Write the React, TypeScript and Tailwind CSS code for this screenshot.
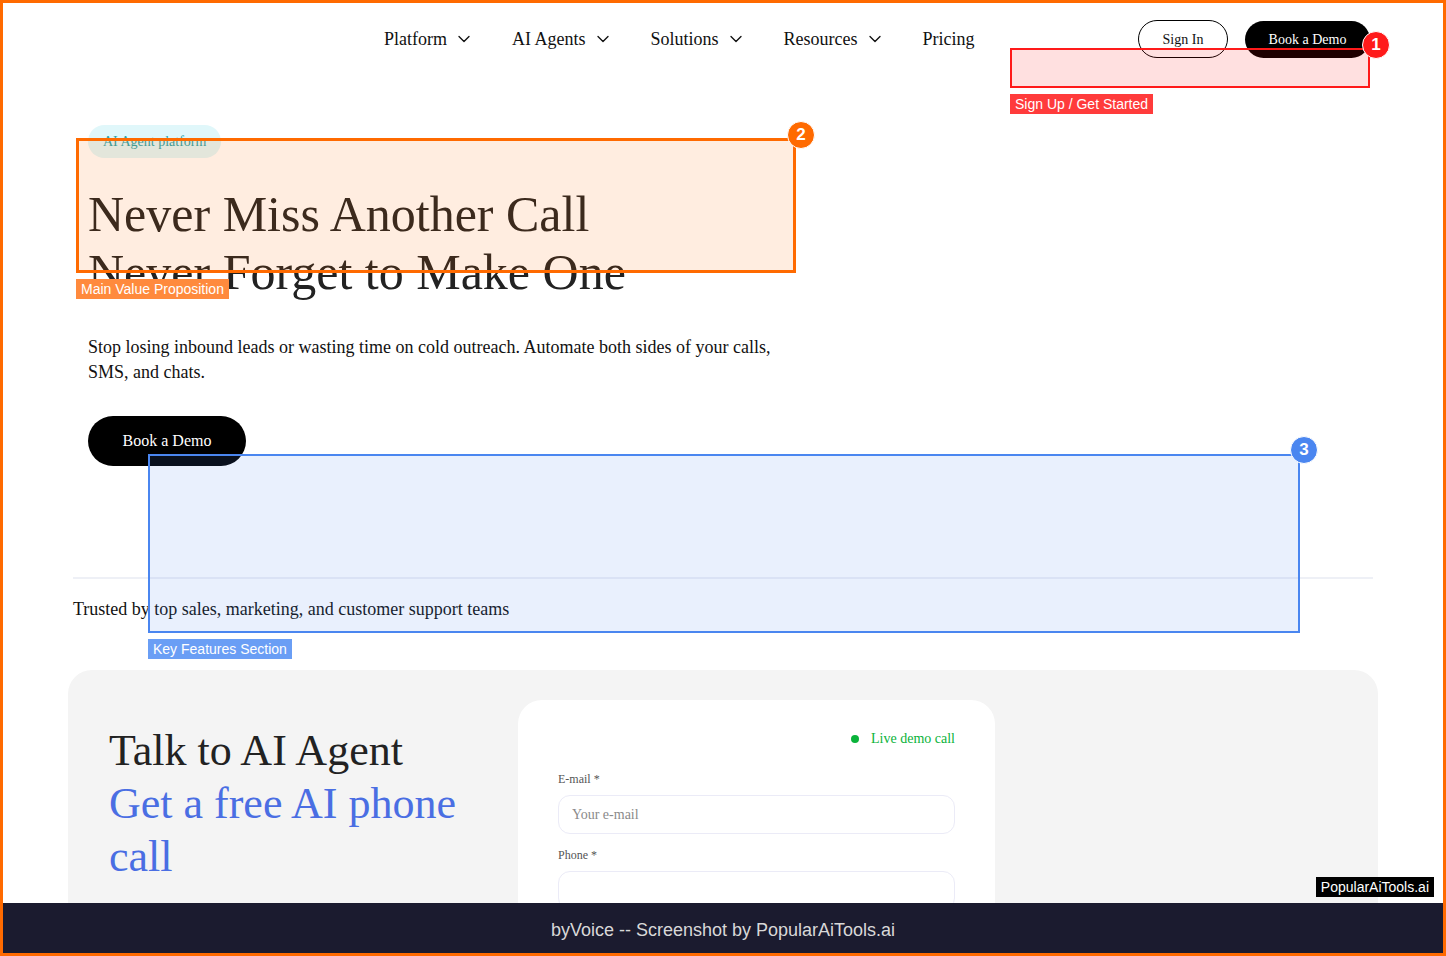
import { ChevronDown } from 'lucide-react';

const navItems = [
  { label: 'Platform', menu: true },
  { label: 'AI Agents', menu: true },
  { label: 'Solutions', menu: true },
  { label: 'Resources', menu: true },
  { label: 'Pricing', menu: false },
];

function Header() {
  return (
    <header className="flex h-[72px] items-center pl-[381px] pr-[73px]">
      <nav className="flex items-center gap-[38px]">
        {navItems.map((item) => (
          <a key={item.label} href="#" className="flex items-center gap-[7px] text-[18px] text-[#111]">
            {item.label}
            {item.menu && <ChevronDown size={20} strokeWidth={1.6} className="text-[#111]" />}
          </a>
        ))}
      </nav>
      <div className="ml-auto flex items-center gap-[17px]">
        <button className="h-[38px] w-[90px] rounded-full border border-black text-[14px] text-[#111]">
          Sign In
        </button>
        <button className="h-[37px] w-[125px] rounded-full bg-black text-[14px] text-white">Book a Demo</button>
      </div>
    </header>
  );
}

function Hero() {
  return (
    <section className="px-[85px] pt-[50px]">
      <span className="inline-flex h-[33px] items-center rounded-full bg-[#e0f7fa] px-[15px] text-[14px] text-[#2aa3a8]">
        AI Agent platform
      </span>
      <h1 className="mt-[27px] text-[50px] leading-[58px] text-[#222]">
        Never Miss Another Call
        <br />
        Never Forget to Make One
      </h1>
      <p className="mt-[34px] w-[700px] text-[18px] leading-[25px] text-[#111]">
        Stop losing inbound leads or wasting time on cold outreach. Automate both sides of your calls, SMS, and chats.
      </p>
      <button className="mt-[31px] h-[50px] w-[158px] rounded-full bg-black text-[16px] text-white">Book a Demo</button>
    </section>
  );
}

function Trusted() {
  return (
    <section className="px-[70px] pt-[111px]">
      <div className="h-[2px] bg-[#eef0f6]" />
      <p className="mt-[18px] text-[18px] leading-[25px] text-[#111]">
        Trusted by top sales, marketing, and customer support teams
      </p>
    </section>
  );
}

function DemoSection() {
  return (
    <section className="px-[65px] pt-[48px]">
      <div className="flex rounded-[24px] bg-[#f4f4f4] pl-[41px] pt-[30px]">
        <div className="w-[409px] pt-[24px]">
          <h2 className="w-[380px] text-[44px] leading-[53px] text-[#222]">
            Talk to AI Agent
            <br />
            <span className="text-[#4a6ee3]">Get a free AI phone call</span>
          </h2>
        </div>
        <div className="h-[260px] w-[477px] rounded-[24px] bg-white px-[40px] pt-[29px]">
          <div className="flex items-center justify-end gap-[12px] text-[14px] leading-[20px] text-[#0ab33a]">
            <span className="h-[8px] w-[8px] rounded-full bg-[#0ab33a]" />
            Live demo call
          </div>
          <label className="mt-[22px] block text-[12px] leading-[16px] text-[#555]">E-mail *</label>
          <input
            type="text"
            placeholder="Your e-mail"
            className="mt-[8px] h-[39px] w-full rounded-[12px] border border-[#ebebf7] px-[13px] text-[14px] placeholder:text-[#8a8a8a]"
          />
          <label className="mt-[13px] block text-[12px] leading-[16px] text-[#555]">Phone *</label>
          <input
            type="text"
            className="mt-[8px] h-[39px] w-full rounded-[12px] border border-[#ebebf7] px-[13px] text-[14px]"
          />
        </div>
      </div>
    </section>
  );
}

function Overlays() {
  return (
    <div className="pointer-events-none font-['Liberation_Sans',Arial,sans-serif] text-[14px]">
      {/* 1 */}
      <div className="absolute left-[1007px] top-[45px] h-[40px] w-[360px] border-2 border-[#ff1a1a] bg-[#ff0000]/[0.12]" />
      <div className="absolute left-[1359px] top-[28px] flex h-[28px] w-[28px] items-center justify-center rounded-full border border-white bg-[#ff1a1a] text-[17px] font-bold text-white">
        1
      </div>
      <div className="absolute left-[1007px] top-[91px] flex h-[20px] items-center bg-[#ff3b3b] px-[5px] leading-none text-white">
        Sign Up / Get Started
      </div>
      {/* 2 */}
      <div className="absolute left-[73px] top-[135px] h-[135px] w-[720px] border-[3px] border-[#ff6a00] bg-[#ff6a00]/[0.12]" />
      <div className="absolute left-[784px] top-[118px] flex h-[28px] w-[28px] items-center justify-center rounded-full border border-white bg-[#ff6a00] text-[17px] font-bold text-white">
        2
      </div>
      <div className="absolute left-[73px] top-[276px] flex h-[20px] items-center bg-[#ff8a3d] px-[5px] leading-none text-white">
        Main Value Proposition
      </div>
      {/* 3 */}
      <div className="absolute left-[145px] top-[451px] h-[179px] w-[1152px] border-2 border-[#4a86f0] bg-[#4a86f0]/[0.12]" />
      <div className="absolute left-[1287px] top-[433px] flex h-[28px] w-[28px] items-center justify-center rounded-full border border-white bg-[#4a86f0] text-[17px] font-bold text-white">
        3
      </div>
      <div className="absolute left-[145px] top-[636px] flex h-[20px] items-center bg-[#6a9ef5] px-[5px] leading-none text-white">
        Key Features Section
      </div>
      {/* watermark */}
      <div className="absolute right-[9px] top-[874px] flex h-[20px] items-center bg-black px-[5px] leading-none text-white">
        PopularAiTools.ai
      </div>
    </div>
  );
}

export default function App() {
  return (
    <div className="relative h-[956px] w-[1446px] overflow-hidden border-[3px] border-[#ff6a00] bg-white font-['Liberation_Serif','Times_New_Roman',serif]">
      <div className="flex h-full flex-col">
        <main className="flex-1 overflow-hidden">
          <Header />
          <Hero />
          <Trusted />
          <DemoSection />
        </main>
        <footer className="flex h-[50px] shrink-0 items-center justify-center bg-[#1b1b2f] pt-[4px] font-['Liberation_Sans',Arial,sans-serif] text-[18px] text-[#d8d8d8]">
          byVoice -- Screenshot by PopularAiTools.ai
        </footer>
      </div>
      <Overlays />
    </div>
  );
}
